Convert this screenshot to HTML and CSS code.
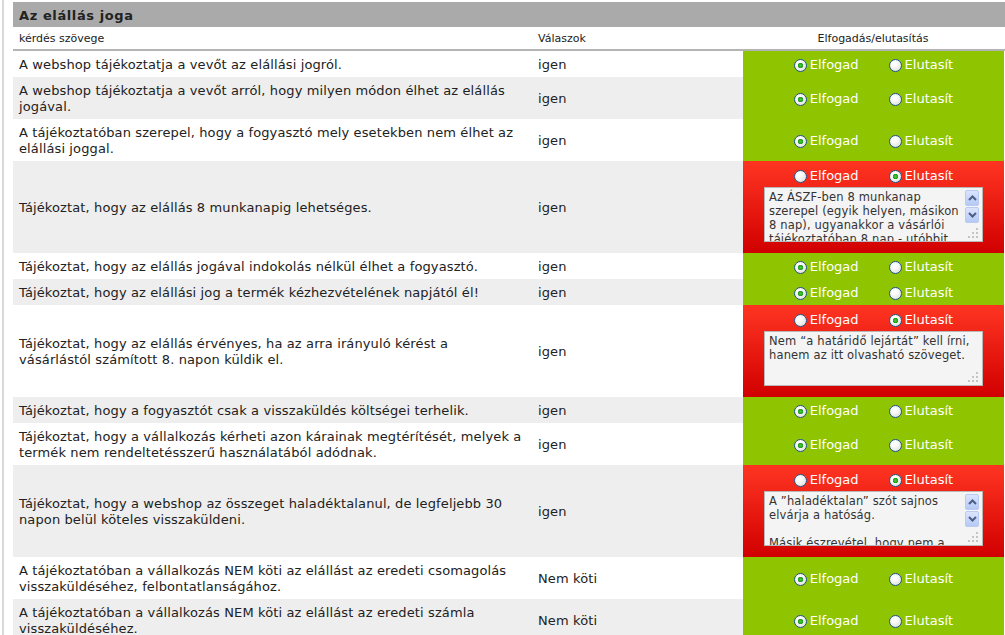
FILE: index.html
```html
<!DOCTYPE html>
<html lang="hu">
<head>
  <meta charset="UTF-8" />
  <title>Az elállás joga</title>
  <link rel="stylesheet" href="styles.css">
</head>
<body>
  <div class="page">
    <div class="section-title">Az elállás joga</div>
    <table class="checklist">
      <colgroup><col class="c-q"><col class="c-a"><col class="c-d"></colgroup>
      <thead>
        <tr><th>kérdés szövege</th><th>Válaszok</th><th class="th-d">Elfogadás/elutasítás</th></tr>
      </thead>
      <tbody>
        <tr>
          <td class="q">A webshop tájékoztatja a vevőt az elállási jogról.</td>
          <td>igen</td>
          <td class="decision">
            <div class="choices">
              <label><input type="radio" name="r1" checked>Elfogad</label>
              <label><input type="radio" name="r1">Elutasít</label>
            </div>
          </td>
        </tr>
        <tr>
          <td class="q">A webshop tájékoztatja a vevőt arról, hogy milyen módon élhet az elállás jogával.</td>
          <td>igen</td>
          <td class="decision">
            <div class="choices">
              <label><input type="radio" name="r2" checked>Elfogad</label>
              <label><input type="radio" name="r2">Elutasít</label>
            </div>
          </td>
        </tr>
        <tr>
          <td class="q">A tájékoztatóban szerepel, hogy a fogyasztó mely esetekben nem élhet az elállási joggal.</td>
          <td>igen</td>
          <td class="decision">
            <div class="choices">
              <label><input type="radio" name="r3" checked>Elfogad</label>
              <label><input type="radio" name="r3">Elutasít</label>
            </div>
          </td>
        </tr>
        <tr>
          <td class="q">Tájékoztat, hogy az elállás 8 munkanapig lehetséges.</td>
          <td>igen</td>
          <td class="decision reject">
            <div class="choices">
              <label><input type="radio" name="r4">Elfogad</label>
              <label><input type="radio" name="r4" checked>Elutasít</label>
            </div>
            <div class="note">
              <textarea>Az ÁSZF-ben 8 munkanap szerepel (egyik helyen, másikon 8 nap), ugyanakkor a vásárlói tájékoztatóban 8 nap - utóbbit kérjük javítani.</textarea>
              <div class="vscroll">
                <span class="sbtn"><svg width="9" height="6" viewBox="0 0 9 6"><path d="M1 5 L4.5 1.5 L8 5" fill="none" stroke="#4b5f86" stroke-width="2"/></svg></span>
                <span class="sbtn"><svg width="9" height="6" viewBox="0 0 9 6"><path d="M1 1 L4.5 4.5 L8 1" fill="none" stroke="#4b5f86" stroke-width="2"/></svg></span>
              </div>
              <svg class="grip" width="12" height="12" viewBox="0 0 12 12"><rect x="9" y="1" width="2" height="2"/><rect x="5" y="5" width="2" height="2"/><rect x="9" y="5" width="2" height="2"/><rect x="1" y="9" width="2" height="2"/><rect x="5" y="9" width="2" height="2"/><rect x="9" y="9" width="2" height="2"/></svg>
            </div>
          </td>
        </tr>
        <tr>
          <td class="q">Tájékoztat, hogy az elállás jogával indokolás nélkül élhet a fogyasztó.</td>
          <td>igen</td>
          <td class="decision">
            <div class="choices">
              <label><input type="radio" name="r5" checked>Elfogad</label>
              <label><input type="radio" name="r5">Elutasít</label>
            </div>
          </td>
        </tr>
        <tr>
          <td class="q">Tájékoztat, hogy az elállási jog a termék kézhezvételének napjától él!</td>
          <td>igen</td>
          <td class="decision">
            <div class="choices">
              <label><input type="radio" name="r6" checked>Elfogad</label>
              <label><input type="radio" name="r6">Elutasít</label>
            </div>
          </td>
        </tr>
        <tr>
          <td class="q">Tájékoztat, hogy az elállás érvényes, ha az arra irányuló kérést a vásárlástól számított 8. napon küldik el.</td>
          <td>igen</td>
          <td class="decision reject">
            <div class="choices">
              <label><input type="radio" name="r7">Elfogad</label>
              <label><input type="radio" name="r7" checked>Elutasít</label>
            </div>
            <div class="note">
              <textarea>Nem “a határidő lejártát” kell írni, hanem az itt olvasható szöveget.</textarea>
              <svg class="grip" width="12" height="12" viewBox="0 0 12 12"><rect x="9" y="1" width="2" height="2"/><rect x="5" y="5" width="2" height="2"/><rect x="9" y="5" width="2" height="2"/><rect x="1" y="9" width="2" height="2"/><rect x="5" y="9" width="2" height="2"/><rect x="9" y="9" width="2" height="2"/></svg>
            </div>
          </td>
        </tr>
        <tr>
          <td class="q">Tájékoztat, hogy a fogyasztót csak a visszaküldés költségei terhelik.</td>
          <td>igen</td>
          <td class="decision">
            <div class="choices">
              <label><input type="radio" name="r8" checked>Elfogad</label>
              <label><input type="radio" name="r8">Elutasít</label>
            </div>
          </td>
        </tr>
        <tr>
          <td class="q">Tájékoztat, hogy a vállalkozás kérheti azon kárainak megtérítését, melyek a termék nem rendeltetésszerű használatából adódnak.</td>
          <td>igen</td>
          <td class="decision">
            <div class="choices">
              <label><input type="radio" name="r9" checked>Elfogad</label>
              <label><input type="radio" name="r9">Elutasít</label>
            </div>
          </td>
        </tr>
        <tr>
          <td class="q">Tájékoztat, hogy a webshop az összeget haladéktalanul, de legfeljebb 30 napon belül köteles visszaküldeni.</td>
          <td>igen</td>
          <td class="decision reject">
            <div class="choices">
              <label><input type="radio" name="r10">Elfogad</label>
              <label><input type="radio" name="r10" checked>Elutasít</label>
            </div>
            <div class="note">
              <textarea>A ”haladéktalan” szót sajnos elvárja a hatóság.

Másik észrevétel, hogy nem a vásárlás napjától számít a határidő.</textarea>
              <div class="vscroll">
                <span class="sbtn"><svg width="9" height="6" viewBox="0 0 9 6"><path d="M1 5 L4.5 1.5 L8 5" fill="none" stroke="#4b5f86" stroke-width="2"/></svg></span>
                <span class="sbtn"><svg width="9" height="6" viewBox="0 0 9 6"><path d="M1 1 L4.5 4.5 L8 1" fill="none" stroke="#4b5f86" stroke-width="2"/></svg></span>
              </div>
              <svg class="grip" width="12" height="12" viewBox="0 0 12 12"><rect x="9" y="1" width="2" height="2"/><rect x="5" y="5" width="2" height="2"/><rect x="9" y="5" width="2" height="2"/><rect x="1" y="9" width="2" height="2"/><rect x="5" y="9" width="2" height="2"/><rect x="9" y="9" width="2" height="2"/></svg>
            </div>
          </td>
        </tr>
        <tr>
          <td class="q">A tájékoztatóban a vállalkozás NEM köti az elállást az eredeti csomagolás visszaküldéséhez, felbontatlanságához.</td>
          <td>Nem köti</td>
          <td class="decision">
            <div class="choices">
              <label><input type="radio" name="r11" checked>Elfogad</label>
              <label><input type="radio" name="r11">Elutasít</label>
            </div>
          </td>
        </tr>
        <tr>
          <td class="q">A tájékoztatóban a vállalkozás NEM köti az elállást az eredeti számla visszaküldéséhez.</td>
          <td>Nem köti</td>
          <td class="decision">
            <div class="choices">
              <label><input type="radio" name="r12" checked>Elfogad</label>
              <label><input type="radio" name="r12">Elutasít</label>
            </div>
          </td>
        </tr>
      </tbody>
    </table>
  </div>
</body>
</html>
```
FILE: styles.css
```css
body { margin: 0; background: #fff; color: #222; font-family: "DejaVu Sans", Verdana, sans-serif; }
.page { margin-left: 2px; border-left: 2px solid #d8d8d8; padding: 2px 0 0 9px; min-height: 100vh; box-sizing: border-box; }
.section-title { width: 992px; height: 25px; box-sizing: border-box; padding: 2px 6px 0; background: #aaa; color: #222; font-size: 13px; font-weight: bold; letter-spacing: 0.6px; line-height: 23px; }

.checklist { width: 992px; border-collapse: collapse; table-layout: fixed; }
.c-q { width: 519px; }
.c-a { width: 211px; }
.c-d { width: 262px; }
.checklist th { height: 22px; padding: 0 6px; border-bottom: 2px solid #b4b4b4; font-size: 11px; font-weight: normal; text-align: left; vertical-align: middle; }
.checklist th.th-d { text-align: center; padding-right: 8px; }
.checklist td { padding: 6px 6px 4px; font-size: 13px; letter-spacing: 0.12px; line-height: 16px; vertical-align: middle; }
.checklist td.q { padding-right: 8px; }
.checklist tbody tr:nth-child(even) td { background: #eee; }

.checklist td.decision { background: #8fc400; border-right: 2px solid #fff; padding: 6px 0 4px; color: #fff; letter-spacing: 0; }
.checklist td.decision.reject { background: linear-gradient(#ff3522, #d10000); padding: 7px 0 11px; vertical-align: top; }
.checklist tbody tr:nth-child(even) td.decision { background: #8fc400; }
.checklist tbody tr:nth-child(even) td.decision.reject { background: linear-gradient(#ff3522, #d10000); }

.choices { display: flex; justify-content: center; gap: 30px; }
.choices label { display: flex; align-items: center; gap: 3px; }
.choices input { appearance: none; width: 13px; height: 13px; margin: 0; box-sizing: border-box; border: 1px solid #1d5488; border-radius: 50%; background: radial-gradient(circle at 40% 35%, #fff 20%, #d6d6d0); }
.choices input:checked { background: radial-gradient(circle, #4ccb3c 0, #1d9a1d 2.5px, transparent 3px), radial-gradient(circle at 40% 35%, #fff 20%, #d6d6d0); }

.note { position: relative; display: flex; width: 219px; height: 55px; box-sizing: border-box; margin: 3px auto 0; border: 1px solid #b8b8b8; background: #f4f4f4; }
.note textarea { flex: 1; min-width: 0; margin: 0; border: 0; padding: 2px 0 0 4px; background: transparent; color: #333; font-family: "DejaVu Sans", Verdana, sans-serif; font-size: 11.5px; letter-spacing: 0.15px; line-height: 14px; resize: none; overflow: hidden; outline: none; }
.vscroll { display: flex; flex-direction: column; gap: 1px; padding: 2px 3px 0 0; }
.sbtn { display: flex; align-items: center; justify-content: center; width: 14px; height: 16px; box-sizing: border-box; border: 1px solid #b9cbf3; border-radius: 2px; background: linear-gradient(#dbe5fd, #b5c9f5); }
.grip { position: absolute; right: 3px; bottom: 2px; fill: #c4c4c4; }
```
